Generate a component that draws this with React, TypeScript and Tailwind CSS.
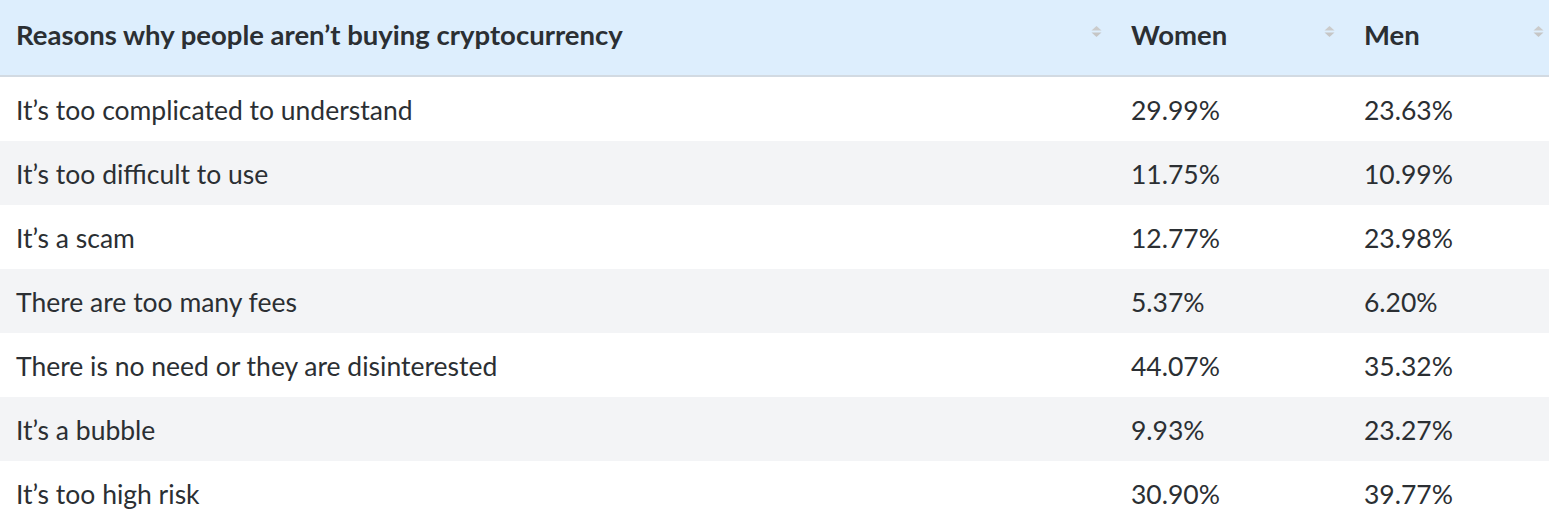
const rows = [
  ['It’s too complicated to understand', '29.99%', '23.63%'],
  ['It’s too difficult to use', '11.75%', '10.99%'],
  ['It’s a scam', '12.77%', '23.98%'],
  ['There are too many fees', '5.37%', '6.20%'],
  ['There is no need or they are disinterested', '44.07%', '35.32%'],
  ['It’s a bubble', '9.93%', '23.27%'],
  ['It’s too high risk', '30.90%', '39.77%'],
];

function SortIcon() {
  return (
    <svg width="11" height="11" viewBox="0 0 11 11" className="shrink-0 mb-[7px]">
      <path d="M5.5 0 L10.5 4.5 H0.5 Z" fill="#cbcbcb" />
      <path d="M5.5 11 L10.5 6.5 H0.5 Z" fill="#c6c6c6" />
    </svg>
  );
}

function HeadCell({ label, className }: { label: string; className: string }) {
  return (
    <div className={`flex items-center justify-between pr-[5px] pb-[5px] ${className}`}>
      <span className="font-bold text-[27.5px]">{label}</span>
      <SortIcon />
    </div>
  );
}

export default function App() {
  return (
    <div className="w-[1549px] bg-white text-[#2b2f33] text-[26.5px]" style={{ fontFamily: 'Lato, "Noto Sans", sans-serif' }}>
      <div className="grid grid-cols-[1107px_233px_209px] h-[77px] bg-[#ddeefd] border-b-2 border-[#d2dae2]">
        <HeadCell label="Reasons why people aren’t buying cryptocurrency" className="pl-4" />
        <HeadCell label="Women" className="pl-6" />
        <HeadCell label="Men" className="pl-6" />
      </div>
      {rows.map((r, i) => (
        <div
          key={r[0]}
          className={`grid grid-cols-[1107px_233px_209px] h-[64px] items-center pt-[3px] ${i % 2 === 1 ? 'bg-[#f3f4f6]' : 'bg-white'}`}
        >
          <div className="pl-4">{r[0]}</div>
          <div className="pl-6">{r[1]}</div>
          <div className="pl-6">{r[2]}</div>
        </div>
      ))}
    </div>
  );
}
